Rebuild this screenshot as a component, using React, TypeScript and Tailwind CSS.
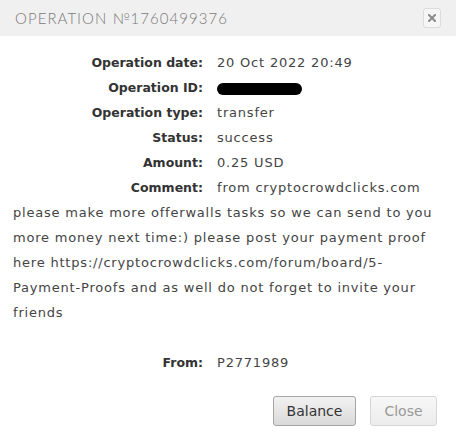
import React from 'react';

const rows = [
  { label: 'Operation date:', value: '20 Oct 2022 20:49' },
  { label: 'Operation ID:', value: null },
  { label: 'Operation type:', value: 'transfer' },
  { label: 'Status:', value: 'success' },
  { label: 'Amount:', value: '0.25 USD' },
];

const comment =
  'from cryptocrowdclicks.com please make more offerwalls tasks so we can send to you more money next time:) please post your payment proof here https://cryptocrowdclicks.com/forum/board/5-Payment-Proofs and as well do not forget to invite your friends';

const Label = ({ children }: { children: React.ReactNode }) => (
  <span className="float-left w-[190px] mr-[14px] text-right font-bold text-[12.5px] tracking-normal text-[#333]">
    {children}
  </span>
);

const App = () => {
  return (
    <div className="w-[456px] h-[438px] bg-white overflow-hidden" style={{ fontFamily: '"DejaVu Sans", sans-serif' }}>
      {/* Header */}
      <div className="h-[36px] bg-[#f0f0f0] flex items-center justify-between pl-[15px] pr-[15px]">
        <span className="text-[15px] tracking-[0.07em] text-[#7a7a7a] font-light" style={{ fontFamily: 'Lato, sans-serif' }}>
          OPERATION №1760499376
        </span>
        <button className="w-[18px] h-[20px] flex items-center justify-center rounded-[3px] border border-[#dcdcdc] bg-[#f6f6f6]">
          <svg width="8" height="8" viewBox="0 0 8 8">
            <path d="M1 1 L7 7 M7 1 L1 7" stroke="#8a8a8a" strokeWidth="2" strokeLinecap="square" />
          </svg>
        </button>
      </div>

      {/* Details */}
      <div className="px-[13px] pt-[14px] text-[13px] tracking-[0.8px] leading-[25px] text-[#444]">
        {rows.map((r, i) => (
          <div key={i} className="flow-root">
            <Label>{r.label}</Label>
            {r.value ? (
              <span>{r.value}</span>
            ) : (
              <span className="inline-block align-middle w-[85px] h-[12px] rounded-full bg-black" />
            )}
          </div>
        ))}
        <div className="flow-root">
          <Label>Comment:</Label>
          <span>{comment}</span>
        </div>
        <div className="h-[25px]" />
        <div className="flow-root">
          <Label>From:</Label>
          <span>P2771989</span>
        </div>

        {/* Buttons */}
        <div className="flex justify-end gap-[14px] mt-[21px] pr-[6px] tracking-normal">
          <button className="w-[83px] h-[30px] rounded-[3px] border border-[#a5a5a5] bg-gradient-to-b from-[#f2f2f2] to-[#d9d9d9] text-[14px] text-[#333]">
            Balance
          </button>
          <button className="w-[67px] h-[30px] rounded-[3px] border border-[#d6d6d6] bg-gradient-to-b from-[#f7f7f7] to-[#ececec] text-[14px] text-[#9a9a9a]">
            Close
          </button>
        </div>
      </div>
    </div>
  );
};

export default App;
